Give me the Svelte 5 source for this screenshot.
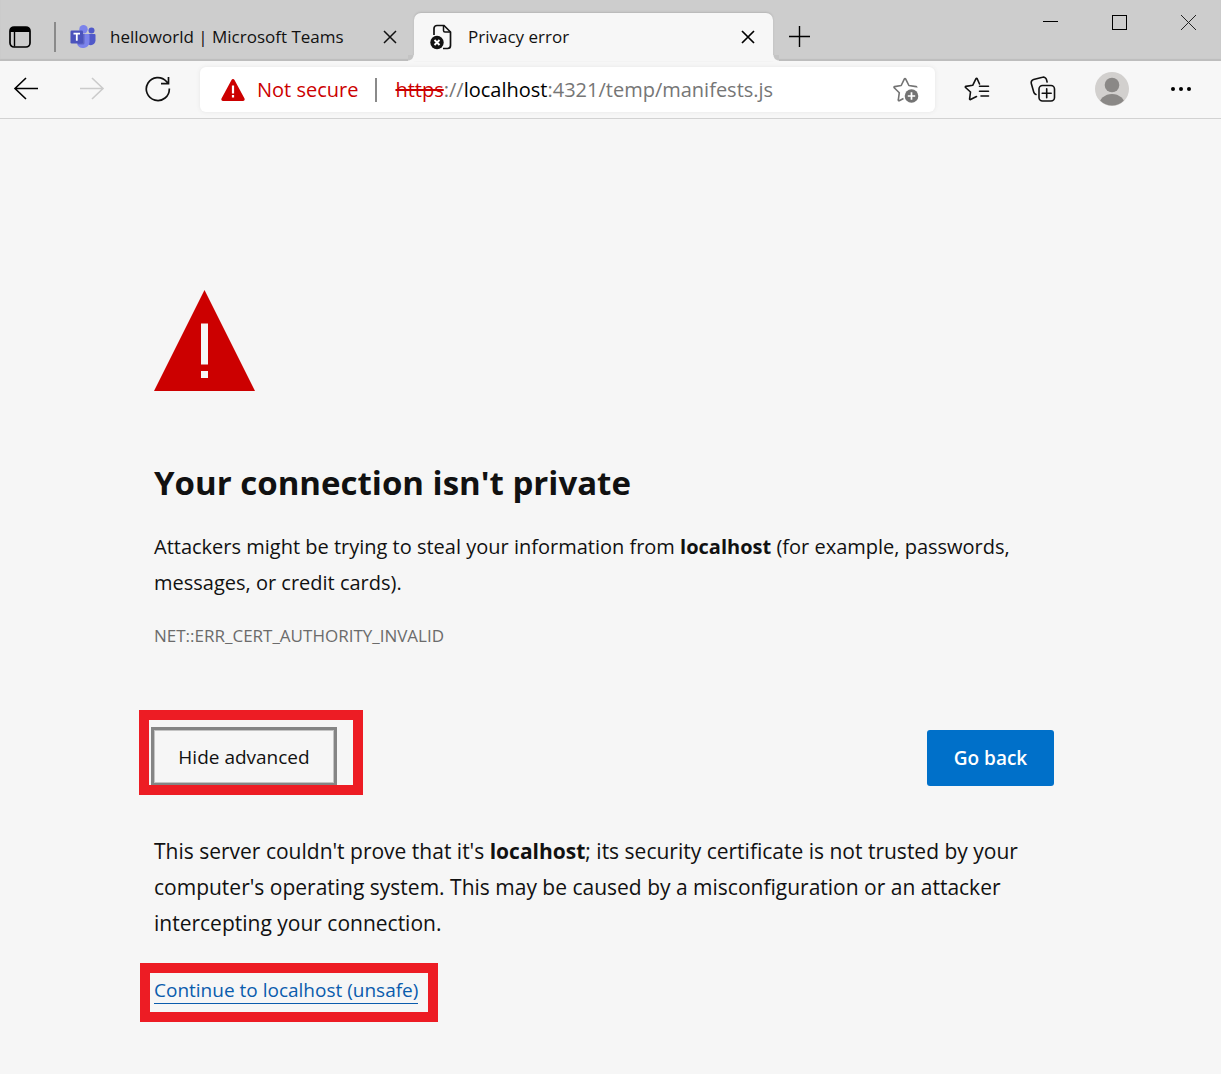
<script>
  const url = 'https://localhost:4321/temp/manifests.js';
  let editing = $state(false);
  let draft = $state('');

  function startEdit() {
    draft = url;
    editing = true;
  }

  function endEdit() {
    draft = '';
    editing = false;
  }
</script>

<div class="browser">
  <header class="strip">
    <button class="tab-menu" aria-label="Tab actions menu">
      <svg width="22" height="22" viewBox="0 0 22 22" fill="none">
        <rect x="1" y="1" width="20" height="20" rx="4" stroke="#000" stroke-width="1.7" />
        <path d="M1 6V5a4 4 0 0 1 4-4h12a4 4 0 0 1 4 4v1z" fill="#000" />
        <path d="M5.5 6v14.500" stroke="#000" stroke-width="1.4" />
      </svg>
    </button>
    <span class="divider"></span>

    <div class="tab">
      <svg class="favicon" width="26" height="24" viewBox="0 0 26 24">
        <circle cx="21.500" cy="5.500" r="3" fill="#5059c9" />
        <path d="M16 9h8.500a1 1 0 0 1 1 1v5.500a4.700 4.700 0 0 1-9.500 0z" fill="#5059c9" />
        <circle cx="13.500" cy="4.200" r="4.200" fill="#7b83eb" />
        <path d="M7 9h11.500a1 1 0 0 1 1 1v7a6.500 6.500 0 0 1-12.500 2z" fill="#7b83eb" />
        <path d="M8 9h6.500v9a1.500 1.500 0 0 1-1.500 1.500H8z" fill="#4a50a8" opacity="0.6" />
        <rect x="0.500" y="5.500" width="12.500" height="13" rx="1.200" fill="#4b53bc" />
        <path d="M3.500 8.700h6.500M6.800 8.700v7" stroke="#fff" stroke-width="1.800" />
      </svg>
      <span class="title">helloworld | Microsoft Teams</span>
      <button class="close" aria-label="Close helloworld tab">
        <svg width="14" height="14" viewBox="0 0 14 14"><path d="M1 1l12 12M13 1L1 13" stroke="#111" stroke-width="1.500" /></svg>
      </button>
    </div>

    <div class="tab active">
      <svg class="favicon" width="24" height="26" viewBox="0 0 24 26" fill="none">
        <path d="M5 11V4.500A3 3 0 0 1 8 1.500h7l6.500 6.500v13.500a3 3 0 0 1-3 3H14" stroke="#111" stroke-width="1.700" />
        <path d="M14.500 1.500V6.500a1.500 1.500 0 0 0 1.500 1.500h5.500" stroke="#111" stroke-width="1.500" />
        <circle cx="8" cy="18.500" r="6.700" fill="#111" />
        <path d="M5.500 16l5 5M10.500 16l-5 5" stroke="#fff" stroke-width="1.900" />
      </svg>
      <span class="title">Privacy error</span>
      <button class="close" aria-label="Close Privacy error tab">
        <svg width="14" height="14" viewBox="0 0 14 14"><path d="M1 1l12 12M13 1L1 13" stroke="#000" stroke-width="1.700" /></svg>
      </button>
    </div>

    <button class="new-tab" aria-label="New tab">
      <svg width="22" height="22" viewBox="0 0 22 22"><path d="M0 10.500h21M10.500 0v21" stroke="#000" stroke-width="1.400" /></svg>
    </button>

    <div class="window">
      <button aria-label="Minimize">
        <svg width="15" height="15" viewBox="0 0 15 15"><path d="M0 6.500h15" stroke="#000" /></svg>
      </button>
      <button aria-label="Maximize">
        <svg width="15" height="15" viewBox="0 0 15 15"><rect x="0.500" y="0.500" width="14" height="14" fill="none" stroke="#000" /></svg>
      </button>
      <button aria-label="Close window">
        <svg width="15" height="15" viewBox="0 0 15 15"><path d="M0 0l15 15M15 0L0 15" stroke="#222" /></svg>
      </button>
    </div>
  </header>

  <nav class="toolbar">
    <button class="tool" aria-label="Back">
      <svg width="26" height="24" viewBox="0 0 26 24" fill="none" stroke="#000" stroke-width="1.600"><path d="M25 11.500H2M13 1L2 11.500l11 10.500" /></svg>
    </button>
    <button class="tool" aria-label="Forward" disabled>
      <svg width="26" height="24" viewBox="0 0 26 24" fill="none" stroke="#cbcbcb" stroke-width="1.600"><path d="M1 11.500h23M13 1l11 10.500L13 22" /></svg>
    </button>
    <button class="tool" aria-label="Refresh">
      <svg width="26" height="26" viewBox="0 0 26 26" fill="none" stroke="#111" stroke-width="1.700"><path d="M24.300 12.500A11.500 11.500 0 1 1 21.500 5.500L23.500 7.700M23.500 1v6.700H16" /></svg>
    </button>

    <div class="address">
      <button class="security">
        <svg width="26" height="24" viewBox="0 0 26 24">
          <path d="M11.500 2a1.700 1.700 0 0 1 3 0l10 18.500a1.700 1.700 0 0 1-1.500 2.500H3a1.700 1.700 0 0 1-1.500-2.500z" fill="#c00" />
          <path d="M13 7.500v8M13 17v2.400" stroke="#fff" stroke-width="2.200" />
        </svg>
        <span>Not secure</span>
      </button>
      <span class="bar"></span>
      <div class="url">
        {#if !editing}
          <span class="shown" aria-hidden="true"><s>https</s>://<b>localhost</b>:4321/temp/manifests.js</span>
        {/if}
        <input type="text" aria-label="Address and search bar" bind:value={draft} onfocus={startEdit} onblur={endEdit} />
      </div>
      <button class="star" aria-label="Add this page to favorites">
        <svg width="28" height="28" viewBox="0 0 28 28" fill="none">
          <path d="M11.500 22.500L7.200 24.700c-.6.300-1-.1-.9-.7l1-7.300L2.200 11.700c-.4-.5-.2-1 .4-1.100l6.600-1.100 3.200-6.600c.3-.6.9-.6 1.200 0l3.300 6.600 7.200 1.100c.5.100.7.600.4 1" stroke="#737373" stroke-width="1.600" stroke-linejoin="round" />
          <circle cx="19.500" cy="20" r="6.800" fill="#737373" />
          <path d="M15.800 20h7.400M19.500 16.300v7.400" stroke="#fff" stroke-width="1.700" />
        </svg>
      </button>
    </div>

    <button class="tool" aria-label="Favorites">
      <svg width="26" height="26" viewBox="0 0 26 26" fill="none" stroke="#111" stroke-width="1.600" stroke-linejoin="round" stroke-linecap="round">
        <path d="M12.500 20.500L6.500 23.500c-.600.300-1-.1-.9-.7L6.500 16 1.500 11.500c-.4-.5-.2-1 .4-1.100l6.800-1.100L12 2.700c.3-.6.900-.6 1.200 0l2.300 5.300" />
        <path d="M15.500 10.300h9M15.500 15.200h9M17 20h7.500" />
      </svg>
    </button>
    <button class="tool" aria-label="Collections">
      <svg width="26" height="26" viewBox="0 0 26 26" fill="none" stroke="#111" stroke-width="1.600" stroke-linecap="round">
        <rect x="9" y="9.500" width="15.500" height="15.500" rx="3.500" />
        <path d="M16.700 12.700v9M12.200 17.200h9" />
        <path d="M6 18.500a3.500 3.500 0 0 1-2.200-2.300L1.300 7.500a3.200 3.200 0 0 1 2.300-4L12.500 1.300a3.200 3.200 0 0 1 4 2.300l.6 2.400" />
      </svg>
    </button>
    <button class="tool avatar" aria-label="Profile">
      <svg width="34" height="34" viewBox="0 0 34 34">
        <defs><clipPath id="disc"><circle cx="17" cy="17" r="16.500" /></clipPath></defs>
        <circle cx="17" cy="17" r="17" fill="#d2d0ce" />
        <circle cx="17" cy="13" r="7.300" fill="#8a8886" />
        <ellipse cx="17" cy="33.500" rx="13" ry="11.500" fill="#8a8886" clip-path="url(#disc)" />
      </svg>
    </button>
    <button class="tool" aria-label="Settings and more">
      <svg width="22" height="6" viewBox="0 0 22 6"><circle cx="3" cy="3" r="2" /><circle cx="11" cy="3" r="2" /><circle cx="19" cy="3" r="2" /></svg>
    </button>
  </nav>

  <main>
    <div class="content">
      <svg class="warning" width="101" height="102" viewBox="0 0 101 102">
        <path d="M50.500 0l50.500 101H0z" fill="#c00" />
        <path d="M47 33.500h7v41h-7zM47 81h7v7h-7z" fill="#f6f6f6" />
      </svg>
      <h1>Your connection isn't private</h1>
      <p class="lead">
        Attackers might be trying to steal your information from <strong>localhost</strong> (for example, passwords, messages, or credit cards).
      </p>
      <p class="code">NET::ERR_CERT_AUTHORITY_INVALID</p>

      <div class="actions">
        <div class="marked advanced-mark">
          <button class="advanced">Hide advanced</button>
        </div>
        <button class="primary">Go back</button>
      </div>

      <p class="detail">
        This server couldn't prove that it's <strong>localhost</strong>; its security certificate is not trusted by your computer's operating system. This may be caused by a misconfiguration or an attacker intercepting your connection.
      </p>
      <div class="marked link-mark">
        <a href="#proceed">Continue to localhost (unsafe)</a>
      </div>
    </div>
  </main>
</div>

<style>
  :global(body) {
    margin: 0;
    background: #f6f6f6;
  }

  .browser {
    font-family: 'Open Sans', 'Noto Sans', sans-serif;
    color: #111;
  }

  button {
    box-sizing: border-box;
    margin: 0;
    padding: 0;
    border: 0;
    background: none;
    color: inherit;
    font: inherit;
    display: flex;
    align-items: center;
    justify-content: center;
  }

  svg {
    display: block;
    flex: none;
  }

  /* Tab strip */
  .strip {
    display: flex;
    height: 61px;
    background: #cdcdcd;
    box-shadow: inset 0 -2px 1px #bdbdbd;
  }

  .tab-menu {
    width: 40px;
    margin-right: 14px;
    padding-top: 12px;
  }

  .divider {
    width: 2px;
    height: 30px;
    margin-top: 22px;
    background: #8a8a8a;
  }

  .tab {
    display: flex;
    align-items: center;
    box-sizing: border-box;
    flex: 0 1 359px;
    min-width: 0;
    margin-top: 13px;
    padding: 0 16px 0 15px;
    font-size: 17px;
  }

  .tab:not(.active) {
    flex-basis: 358px;
    padding-left: 14px;
    padding-right: 15px;
  }

  .favicon {
    margin-right: 14px;
  }

  .title {
    flex: 1;
    padding-bottom: 2px;
    overflow: hidden;
    white-space: nowrap;
  }

  .close {
    width: 18px;
    height: 18px;
  }

  .active {
    position: relative;
    background: #f7f7f7;
    border-radius: 7px 7px 0 0;
    box-shadow: 0 -1px 2px #b5b5b5;
  }

  .active .favicon {
    margin-right: 15px;
  }

  .active::before,
  .active::after {
    content: '';
    position: absolute;
    bottom: 0;
    width: 6px;
    height: 6px;
  }

  .active::before {
    right: 100%;
    background: radial-gradient(circle at 0 0, #c4c4c4 5px, #f7f7f7 6px);
  }

  .active::after {
    left: 100%;
    background: radial-gradient(circle at 100% 0, #c4c4c4 5px, #f7f7f7 6px);
  }

  .new-tab {
    width: 54px;
    padding-top: 12px;
  }

  .window {
    display: flex;
    gap: 3px;
    margin-left: auto;
    height: 45px;
  }

  .window button {
    width: 66px;
  }

  /* Toolbar */
  .toolbar {
    display: flex;
    align-items: center;
    gap: 14px;
    height: 57px;
    padding-right: 14px;
    background: #f7f7f7;
    border-bottom: 1px solid #d2d2d2;
  }

  .tool {
    width: 52px;
    height: 45px;
    padding-bottom: 2px;
  }

  .avatar {
    margin: 0 3px;
  }

  .address {
    display: flex;
    align-items: center;
    flex: 1;
    min-width: 0;
    height: 45px;
    margin: 0 2px;
    padding: 0 15px 0 20px;
    box-sizing: border-box;
    background: #fff;
    border-radius: 6px;
    box-shadow: 0 0 4px #e6e6e6;
    font-size: 20px;
  }

  .security {
    gap: 11px;
    color: #c00;
    white-space: nowrap;
  }

  .bar {
    width: 2px;
    height: 24px;
    margin: 0 18px 0 17px;
    background: #8a8a8a;
  }

  .url {
    position: relative;
    flex: 1;
    min-width: 0;
    height: 28px;
    line-height: 28px;
    color: #767676;
    white-space: nowrap;
    overflow: hidden;
  }

  .url s {
    color: #c00;
  }

  .url b {
    font-weight: 400;
    color: #000;
  }

  .url input {
    position: absolute;
    inset: 0;
    width: 100%;
    padding: 0;
    border: 0;
    outline: 0;
    background: transparent;
    color: #000;
    font: inherit;
  }

  /* Interstitial */
  main {
    padding: 171px 13px 48px 0;
  }

  .content {
    max-width: 900px;
    margin: 0 auto;
  }

  h1 {
    margin: 67px 0 0;
    font-size: 33px;
    line-height: 48px;
    font-weight: 700;
  }

  p {
    margin: 0;
  }

  .lead,
  .detail {
    line-height: 36px;
  }

  .lead {
    margin-top: 22px;
    font-size: 20px;
  }

  .code {
    margin-top: 23px;
    font-size: 17px;
    line-height: 24px;
    color: #6b6b6b;
  }

  .actions {
    display: flex;
    justify-content: space-between;
    align-items: flex-start;
    margin-top: 82px;
  }

  /* Red call-out frames drawn round a control */
  .marked {
    position: relative;
  }

  .marked::after {
    content: '';
    position: absolute;
    border: 10px solid #ed1c24;
    pointer-events: none;
  }

  .advanced-mark::after {
    inset: -20px -29px -12px -15px;
  }

  .link-mark::after {
    inset: -14px -20px -18px -14px;
  }

  .advanced {
    width: 180px;
    height: 53px;
    border: 1px solid #c4c4c4;
    outline: 3px solid #858585;
    font-size: 19px;
  }

  .primary {
    width: 127px;
    height: 56px;
    border-radius: 3px;
    background: #0070c9;
    color: #fff;
    font-size: 19px;
    font-weight: 600;
  }

  .detail {
    margin-top: 47px;
    font-size: 21px;
  }

  .link-mark {
    width: fit-content;
    margin-top: 36px;
    line-height: 26px;
  }

  a {
    display: block;
    border-bottom: 1px solid #0a5cad;
    color: #0a5cad;
    font-size: 19px;
    text-decoration: none;
  }
</style>
